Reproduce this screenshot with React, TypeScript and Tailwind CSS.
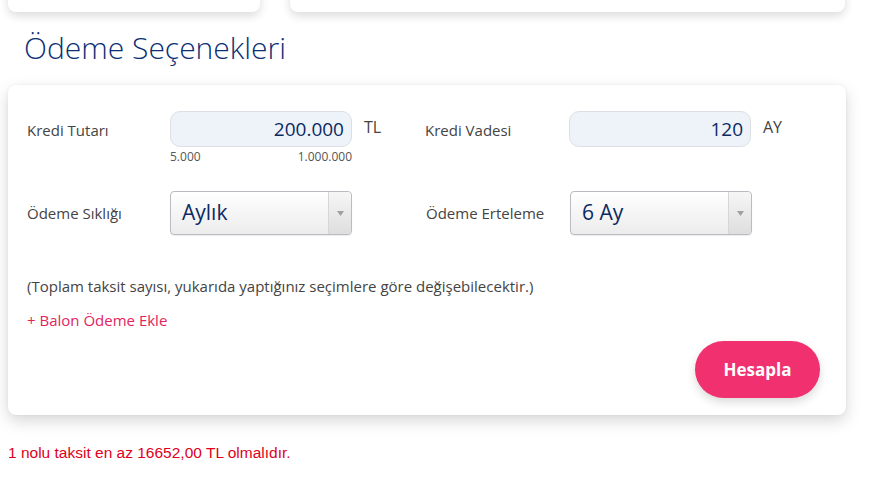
import { useState } from "react";

function AmountInput({ value, unit }: { value: string; unit: string }) {
  return (
    <div className="flex items-start">
      <div className="w-[182px] h-[36px] rounded-[10px] border border-[#dcdfe4] bg-[#eef3fa] flex items-center justify-end px-[7px] text-[19px] text-[#0b2a63]">
        {value}
      </div>
      <span className="ml-[12px] mt-[4px] text-[16px] text-[#444]">{unit}</span>
    </div>
  );
}

function SelectBox({ value }: { value: string }) {
  return (
    <div className="w-[182px] h-[44px] rounded-[4px] border border-[#b9bcc1] bg-gradient-to-b from-white to-[#ececec] flex items-stretch shadow-[0_1px_1px_rgba(0,0,0,0.08)]">
      <div className="flex-1 flex items-center pl-[11px] text-[21px] text-[#0b2a63]">{value}</div>
      <div className="w-[23px] border-l border-[#d4d6d9] bg-gradient-to-b from-[#f6f6f6] to-[#dedede] flex items-center justify-center rounded-r-[4px]">
        <svg width="7" height="5" viewBox="0 0 7 5">
          <path d="M0 0 L7 0 L3.5 5 Z" fill="#a0a0a0" />
        </svg>
      </div>
    </div>
  );
}

export default function App() {
  const [period] = useState("Aylık");

  return (
    <div className="w-full h-[495px] bg-white overflow-hidden font-['Open_Sans',sans-serif]">
      {/* cards above, cut off */}
      <div className="h-[12px] flex gap-[30px] px-[8px]">
        <div className="w-[252px] h-[40px] -mt-[28px] rounded-lg bg-white shadow-[0_4px_10px_rgba(0,0,0,0.14)]" />
        <div className="w-[555px] h-[40px] -mt-[28px] rounded-lg bg-white shadow-[0_4px_10px_rgba(0,0,0,0.14)]" />
      </div>

      <h1 className="mt-[16px] ml-[24px] text-[30px] leading-[40px] font-light text-[#0b2f75]">
        Ödeme Seçenekleri
      </h1>

      <div className="mt-[17px] ml-[8px] w-[838px] rounded-lg bg-white shadow-[0_6px_16px_rgba(0,0,0,0.16),0_0_3px_rgba(0,0,0,0.06)] pt-[26px] pb-[17px] pl-[19px] pr-[26px]">
        <div className="flex">
          <div className="w-[398px] flex">
            <span className="w-[143px] mt-[8px] text-[15px] text-[#444]">Kredi Tutarı</span>
            <div>
              <AmountInput value="200.000" unit="TL" />
              <div className="w-[182px] flex justify-between text-[12px] text-[#555] mt-[1px]">
                <span>5.000</span>
                <span>1.000.000</span>
              </div>
            </div>
          </div>
          <div className="flex">
            <span className="w-[144px] mt-[8px] text-[15px] text-[#444]">Kredi Vadesi</span>
            <AmountInput value="120" unit="AY" />
          </div>
        </div>

        <div className="flex mt-[25px] items-center">
          <div className="w-[399px] flex items-center">
            <span className="w-[143px] text-[15px] text-[#444]">Ödeme Sıklığı</span>
            <SelectBox value={period} />
          </div>
          <div className="flex items-center">
            <span className="w-[144px] text-[15px] text-[#444]">Ödeme Erteleme</span>
            <SelectBox value="6 Ay" />
          </div>
        </div>

        <p className="mt-[40px] text-[15px] text-[#444] leading-[22px]">
          (Toplam taksit sayısı, yukarıda yaptığınız seçimlere göre değişebilecektir.)
        </p>
        <p className="mt-[12px] text-[15px] text-[#e3245f] leading-[22px]">+ Balon Ödeme Ekle</p>

        <div className="flex justify-end mt-[10px]">
          <button className="w-[125px] h-[57px] rounded-full bg-[#f0306f] text-white text-[17px] font-bold shadow-[0_4px_10px_rgba(0,0,0,0.15)]">
            Hesapla
          </button>
        </div>
      </div>

      <p className="mt-[26px] ml-[8px] text-[15.5px] text-[#e0001b] font-['Liberation_Sans',sans-serif]">
        1 nolu taksit en az 16652,00 TL olmalıdır.
      </p>
    </div>
  );
}
